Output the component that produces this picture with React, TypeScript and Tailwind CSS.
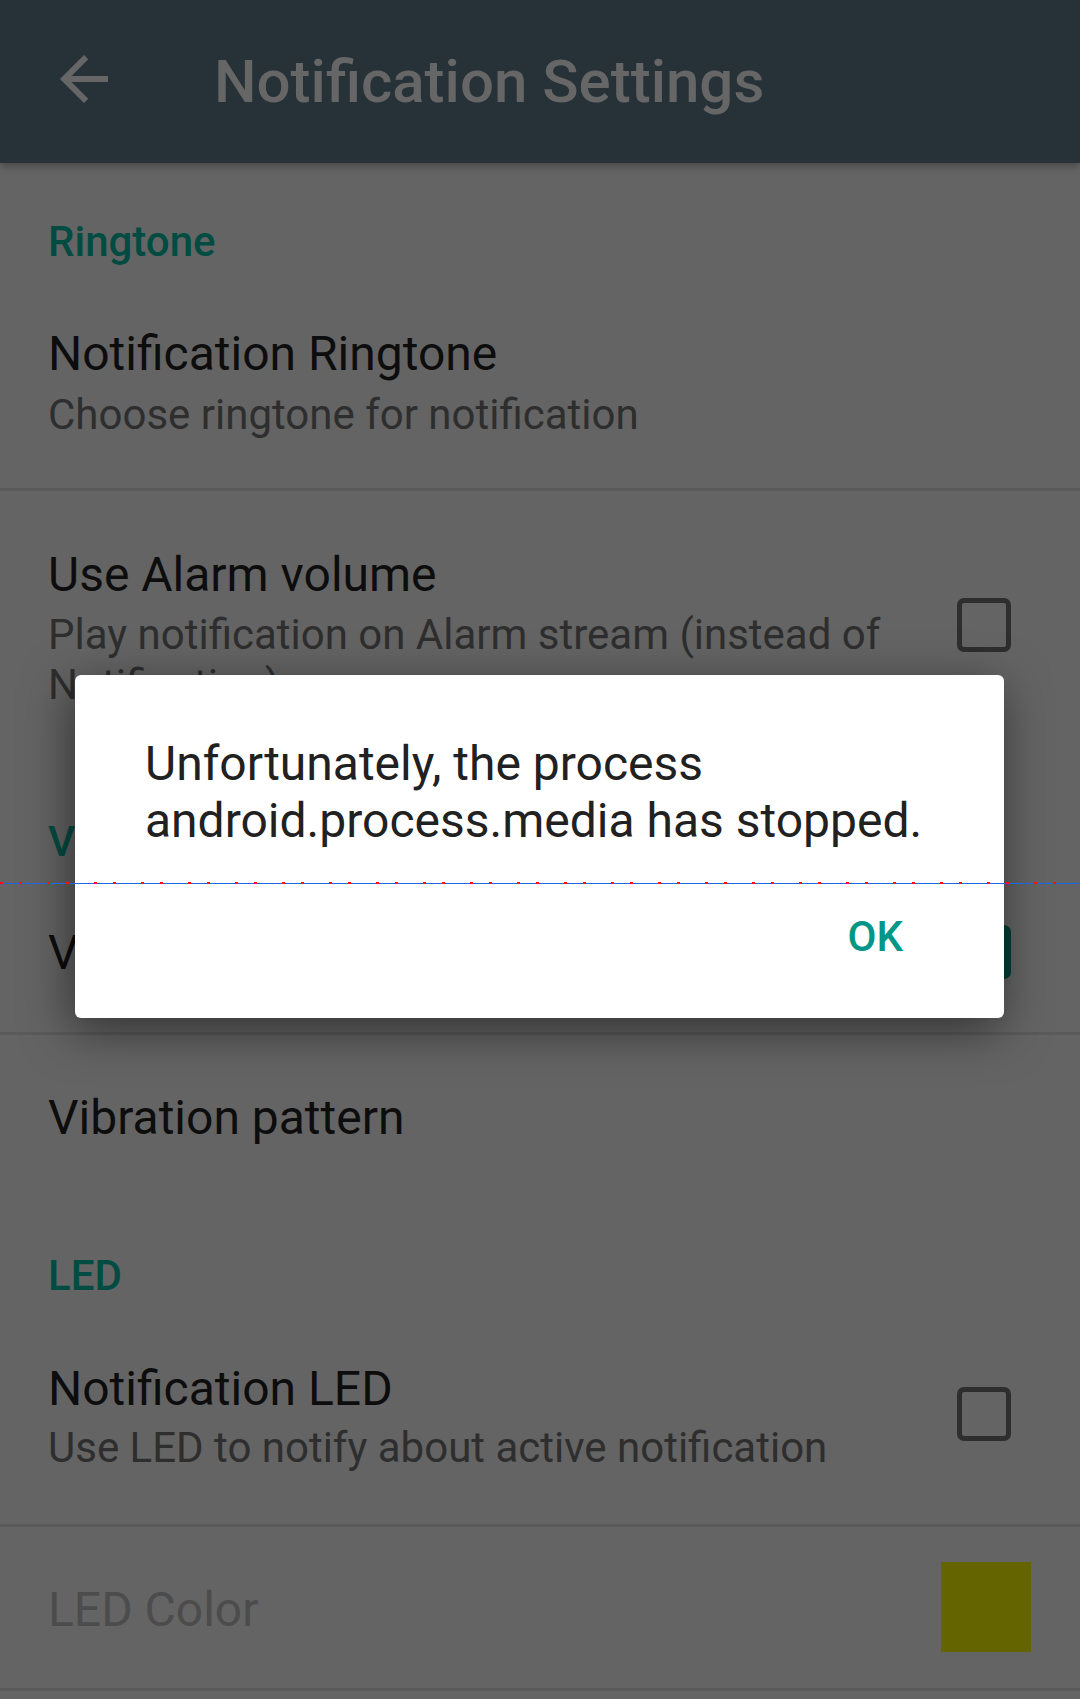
import React from "react";

function Divider() {
  return <div className="h-[3px] bg-[#5a5a5a]" />;
}

function CategoryHeader({ title }: { title: string }) {
  return (
    <div className="px-[48px] pt-[54px] text-[42px] font-medium leading-[50px] text-[#004c42]">
      {title}
    </div>
  );
}

function CheckBox({ checked = false, className = "" }: { checked?: boolean; className?: string }) {
  if (checked) {
    return <div className={`size-[54px] shrink-0 rounded-[7px] bg-[#003f37] ${className}`} />;
  }
  return (
    <div className={`size-[54px] shrink-0 rounded-[7px] border-[5px] border-[#2e2e2e] ${className}`} />
  );
}

function BackArrow() {
  return (
    <svg viewBox="0 0 24 24" className="size-[72px] shrink-0 fill-[#666666]">
      <path d="M20 11H7.83l5.59-5.59L12 4l-8 8 8 8 1.41-1.41L7.83 13H20v-2z" />
    </svg>
  );
}

export default function App() {
  return (
    <div className="relative min-h-[1699px] w-full overflow-hidden bg-[#646464] font-['Roboto',sans-serif]">
      <header className="relative z-10 flex h-[163px] items-center bg-[#263238] shadow-[0_3px_8px_rgba(0,0,0,0.3)]">
        <div className="ml-[48px] -mt-[5px]">
          <BackArrow />
        </div>
        <h1 className="ml-[94px] text-[60px] font-medium leading-[70px] text-[#666666]">
          Notification Settings
        </h1>
      </header>

      <CategoryHeader title="Ringtone" />
      <div className="px-[48px] pt-[59px] pb-[48px]">
        <p className="text-[48px] leading-[56px] text-[#0d0d0d]">Notification Ringtone</p>
        <p className="mt-[8px] text-[42px] leading-[50px] text-[#2e2e2e]">
          Choose ringtone for notification
        </p>
      </div>
      <Divider />
      <div className="flex items-center px-[48px] pt-[56px] pb-[53px]">
        <div className="flex-1 pr-[40px]">
          <p className="text-[48px] leading-[56px] text-[#0d0d0d]">Use Alarm volume</p>
          <p className="mt-[7px] text-[42px] leading-[50px] text-[#2e2e2e]">
            Play notification on Alarm stream (instead of Notification)
          </p>
        </div>
        <CheckBox className="mr-[21px] -mt-[8px]" />
      </div>

      <CategoryHeader title="Vibration" />
      <div className="flex items-center px-[48px] pt-[58px] pb-[51px]">
        <p className="flex-1 text-[48px] leading-[56px] text-[#0d0d0d]">Vibrate</p>
        <CheckBox checked className="mr-[21px] -mt-[3px]" />
      </div>
      <Divider />
      <div className="px-[48px] pt-[55px] pb-[51px]">
        <p className="text-[48px] leading-[56px] text-[#0d0d0d]">Vibration pattern</p>
      </div>

      <CategoryHeader title="LED" />
      <div className="flex items-center px-[48px] pt-[60px] pb-[51px]">
        <div className="flex-1 pr-[40px]">
          <p className="text-[48px] leading-[56px] text-[#0d0d0d]">Notification LED</p>
          <p className="mt-[6px] text-[42px] leading-[50px] text-[#2e2e2e]">
            Use LED to notify about active notification
          </p>
        </div>
        <CheckBox className="mr-[21px] -mt-[7px]" />
      </div>
      <Divider />
      <div className="flex h-[161px] items-center px-[48px]">
        <p className="mt-[5px] flex-1 text-[48px] leading-[56px] text-[#4c4c4c]">LED Color</p>
        <div className="mr-[1px] -mt-[1px] size-[90px] bg-[#646400]" />
      </div>
      <Divider />

      <div className="absolute left-[75px] top-[675px] flex h-[343px] w-[929px] flex-col rounded-[6px] bg-white shadow-[-4px_12px_48px_rgba(0,0,0,0.5)]">
        <p className="pt-[60px] pl-[70px] pr-[40px] text-[48px] leading-[57px] text-[#212121]">
          Unfortunately, the process android.process.media has stopped.
        </p>
        <div className="mt-[63px] flex justify-end pr-[101px]">
          <button className="text-[42px] font-medium leading-[50px] text-[#009688]">OK</button>
        </div>
      </div>

      <div className="absolute left-0 top-[883px] h-px w-full bg-[#1f66e5]" />
      <div className="absolute left-0 top-[882px] h-[2px] w-full bg-[repeating-linear-gradient(90deg,#ff1010_0_3px,transparent_3px_19px,#ff1010_19px_22px,transparent_22px_47px)]" />
    </div>
  );
}
